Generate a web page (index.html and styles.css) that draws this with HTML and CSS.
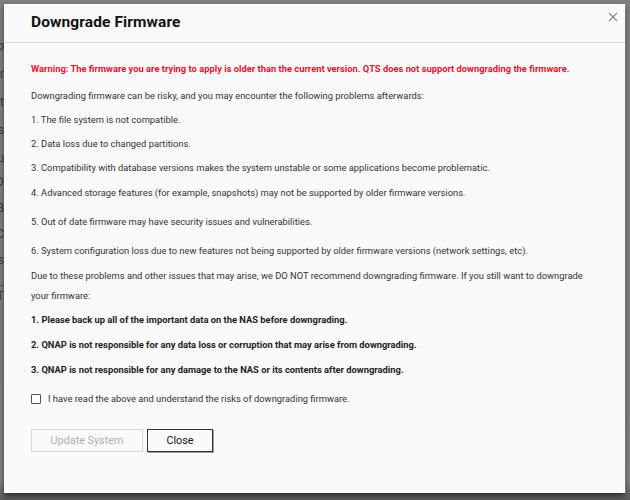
FILE: index.html
```html
<!DOCTYPE html>
<html>
<head>
<meta charset="utf-8">
<link rel="stylesheet" href="styles.css">
</head>
<body>
<div class="page">
  <div class="strip" aria-hidden="true">
    <div class="bg-row r1"><span>Info</span></div>
    <div class="bg-row r2"><span>Firmwar</span></div>
    <div class="bg-row r3"><span>Host</span></div>
    <div class="bg-row r4"><span>Users</span></div>
    <div class="bg-row r5"><span>Statu</span></div>
    <div class="bg-row r6"><span>HDD</span></div>
    <div class="bg-row r7"><span>WEB</span></div>
    <div class="bg-row r8"><span>ABC</span></div>
    <div class="bg-row r9"><span>Apps</span></div>
    <div class="bg-rule"></div>
    <div class="bg-row r10"><span>QT</span></div>
  </div>
</div>

<div class="modal">
  <div class="modal-header">
    <h1 class="title">Downgrade Firmware</h1>
    <span class="close-x">
      <svg width="10" height="10" viewBox="0 0 10 10"><path d="M1 1 L9 9 M9 1 L1 9" stroke="#8a8a8a" stroke-width="1.2" fill="none"/></svg>
    </span>
  </div>
  <div class="modal-body">
    <p class="warn">Warning: The firmware you are trying to apply is older than the current version. QTS does not support downgrading the firmware.</p>
    <p>Downgrading firmware can be risky, and you may encounter the following problems afterwards:</p>
    <p>1. The file system is not compatible.</p>
    <p>2. Data loss due to changed partitions.</p>
    <p class="m1">3. Compatibility with database versions makes the system unstable or some applications become problematic.</p>
    <p class="m2">4. Advanced storage features (for example, snapshots) may not be supported by older firmware versions.</p>
    <p class="m2">5. Out of date firmware may have security issues and vulnerabilities.</p>
    <p class="m1">6. System configuration loss due to new features not being supported by older firmware versions (network settings, etc).</p>
    <p>Due to these problems and other issues that may arise, we DO NOT recommend downgrading firmware. If you still want to downgrade your firmware:</p>
    <p class="b m1">1. Please back up all of the important data on the NAS before downgrading.</p>
    <p class="b m1">2. QNAP is not responsible for any data loss or corruption that may arise from downgrading.</p>
    <p class="b">3. QNAP is not responsible for any damage to the NAS or its contents after downgrading.</p>
    <label class="check-row"><span class="box"></span><span>I have read the above and understand the risks of downgrading firmware.</span></label>
    <div class="actions">
      <button class="btn btn-disabled">Update System</button>
      <button class="btn btn-close">Close</button>
    </div>
  </div>
</div>
</body>
</html>
```

FILE: styles.css
```css
html, body {
  margin: 0;
  padding: 0;
}
body {
  width: 630px;
  height: 500px;
  overflow: hidden;
  position: relative;
  background: #7e7e7e;
  font-family: Roboto, "Liberation Sans", sans-serif;
}
.page {
  height: 500px;
  background: linear-gradient(#7f7f7f 0, #828282 480px, #5a5a5a 500px);
}
.strip {
  width: 4px;
  overflow: hidden;
  display: flex;
  flex-direction: column;
  padding-top: 39px;
}
.bg-row {
  display: flex;
  justify-content: flex-end;
  white-space: nowrap;
  font-size: 12px;
  line-height: 14px;
  color: #3c3c3c;
  height: 14px;
}
.r2, .r3, .r4, .r5 { margin-top: 14px; }
.r6 { margin-top: 10px; }
.r7 { margin-top: 12px; }
.r8 { margin-top: 12px; }
.r9 { margin-top: 12px; }
.bg-rule {
  height: 1px;
  background: #555;
  margin-top: 18px;
}
.r10 { margin-top: 3px; }

.modal {
  position: absolute;
  left: 4px;
  top: 4px;
  width: 621px;
  height: 489px;
  background: #fafafa;
  box-shadow: 0 3px 5px rgba(0,0,0,0.55), 1px 0 0 #9a9a9a;
  display: flex;
  flex-direction: column;
}
.modal-header {
  height: 39px;
  border-bottom: 1px solid #dadada;
  display: flex;
  align-items: center;
  justify-content: space-between;
  padding: 0 7px 3px 27px;
  box-sizing: border-box;
}
.title {
  margin: 0;
  font-size: 15.5px;
  font-weight: 700;
  color: #111;
  letter-spacing: 0.1px;
}
.close-x {
  display: flex;
  align-self: flex-start;
  margin-top: 8px;
}
.modal-body {
  padding: 16px 27px 0 27px;
  display: flex;
  flex-direction: column;
  color: #333;
  font-size: 9.35px;
  line-height: 20px;
}
.modal-body p {
  margin: 0 0 4px 0;
}
.modal-body p.warn {
  color: #f2102a;
  font-weight: 700;
  margin-bottom: 7px;
}
.modal-body p.m1 { margin-bottom: 5px; }
.modal-body p.m2 { margin-bottom: 9px; }
.modal-body p.b {
  font-weight: 700;
  color: #222;
}
.check-row {
  display: flex;
  align-items: center;
  gap: 7px;
  margin-top: 5px;
  height: 20px;
}
.box {
  width: 8px;
  height: 8px;
  border: 1px solid #555;
  border-radius: 1px;
  background: #fff;
}
.actions {
  display: flex;
  gap: 4px;
  margin-top: 20px;
}
.btn {
  height: 23px;
  box-sizing: border-box;
  font-family: Roboto, "Liberation Sans", sans-serif;
  font-size: 10.8px;
  background: #fafafa;
  padding: 0;
  border-radius: 0;
}
.btn-disabled {
  width: 112px;
  border: 1px solid #d6d6d6;
  color: #b0b0b0;
}
.btn-close {
  width: 66px;
  border: 1px solid #333;
  color: #111;
  box-shadow: 1px 1px 0 #9a9a9a;
}
```
